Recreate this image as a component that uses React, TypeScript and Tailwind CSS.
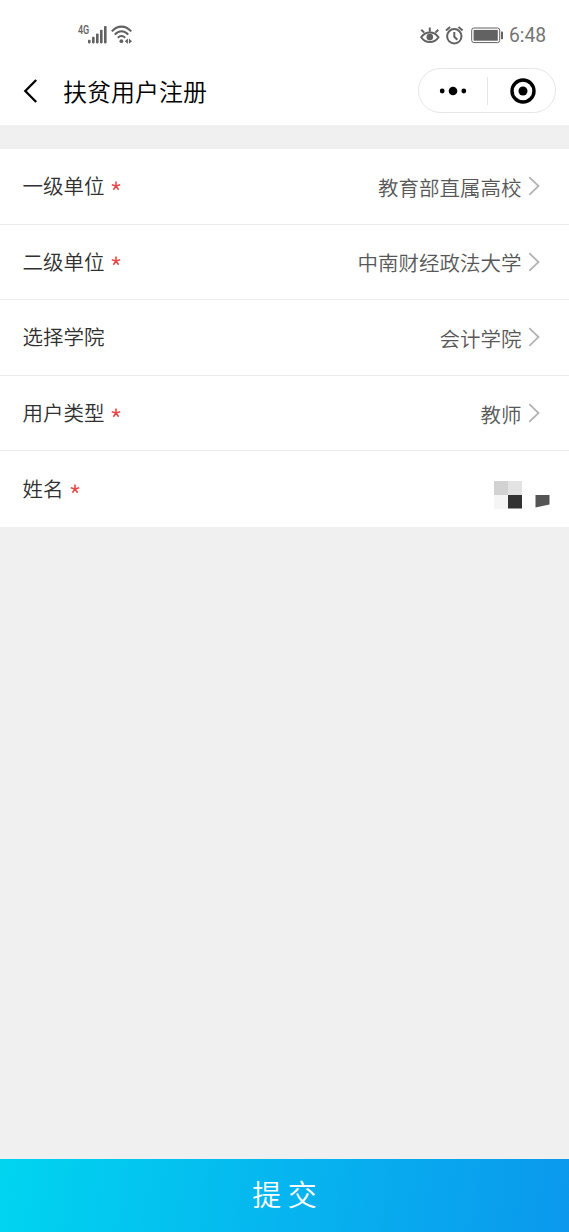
import React from "react";

type Field = { label: string; required?: boolean; value?: string };

const fields: Field[] = [
  { label: "一级单位", required: true, value: "教育部直属高校" },
  { label: "二级单位", required: true, value: "中南财经政法大学" },
  { label: "选择学院", value: "会计学院" },
  { label: "用户类型", required: true, value: "教师" },
  { label: "姓名", required: true },
];

function StatusBar() {
  return (
    <div className="flex h-[58px] shrink-0 items-start justify-between pt-[22px] pr-[24px] pl-[78px] text-[#626262]">
      <div className="flex items-start">
        <span className="mt-[2px] w-[9.5px] origin-left scale-x-[0.75] font-['Roboto',sans-serif] text-[12px] leading-[13px] font-medium">4G</span>
        <svg width="20" height="26" viewBox="0 0 20 26" fill="currentColor">
          <rect x="0" y="17.8" width="2.6" height="3.6" rx=".8" />
          <rect x="4" y="14.8" width="2.6" height="6.6" rx=".8" />
          <rect x="8" y="11.4" width="2.6" height="10" rx=".8" />
          <rect x="12" y="7.8" width="2.6" height="13.6" rx=".8" />
          <rect x="16" y="4" width="2.6" height="17.4" rx=".8" />
        </svg>
        <svg className="ml-[3.5px]" width="22" height="26" viewBox="0 0 22 26" fill="none" stroke="currentColor" strokeWidth="2.1">
          <path d="M.8 9.4C6.5 3 14.5 3 20.2 9.4" />
          <path d="M3.8 12.6c4-4.4 9.4-4.4 13.4 0" />
          <path d="M6.8 15.8c2.3-2.4 5.1-2.4 7.4 0" />
          <circle cx="10.4" cy="19.2" r="1.9" fill="currentColor" stroke="none" />
          <path d="M16.9 16.6v5.2L13.8 19.2zM17.9 16.6v5.2l3.1-2.6z" fill="currentColor" stroke="none" />
        </svg>
      </div>
      <div className="flex items-center">
        <svg width="20" height="26" viewBox="0 0 20 26" fill="none" stroke="currentColor" strokeWidth="2">
          <path d="M1.2 14.2C5.5 7.8 14.2 7.8 18.5 14.2 14.2 20.6 5.5 20.6 1.2 14.2Z" />
          <circle cx="9.8" cy="14.1" r="3.3" fill="currentColor" stroke="none" />
          <path d="M9.8 4.6v4.2M4.2 9.6 1.3 6.7M15.4 9.6 18.3 6.7" />
        </svg>
        <svg className="ml-[5px]" width="19" height="26" viewBox="0 0 19 26" fill="none" stroke="currentColor" strokeWidth="2">
          <circle cx="9.3" cy="13.3" r="7.2" />
          <path d="M9.3 9v4.8l3 3M1 7.6l4.1-3.6M17.6 7.6l-4.1-3.6" />
        </svg>
        <svg className="ml-[7px]" width="33" height="26" viewBox="0 0 33 26">
          <rect x=".7" y="5" width="28" height="14.6" rx="2.2" fill="none" stroke="currentColor" strokeWidth="1" />
          <rect x="2.6" y="6.9" width="24.2" height="10.8" fill="currentColor" />
          <rect x="30" y="8.6" width="2" height="7.6" rx=".6" fill="currentColor" />
        </svg>
        <span className="ml-[5px] w-[36px] font-['Roboto',sans-serif] text-[19.3px] leading-[27px] font-normal whitespace-nowrap text-[#747474]">6:48</span>
      </div>
    </div>
  );
}

function NavBar() {
  return (
    <header className="flex h-[67px] shrink-0 items-center pr-[13px] pb-[2px] pl-[23px] text-black">
      <svg width="16" height="26" viewBox="0 0 16 26" fill="none" stroke="currentColor" strokeWidth="2.3">
        <path d="M13.2 2 2.3 13l10.9 11" />
      </svg>
      <h1 className="ml-[24px] text-[24px] leading-[34px] font-[350]">扶贫用户注册</h1>
      <div className="ml-auto flex h-[45px] w-[138px] items-center rounded-full border border-[#e6e6e6]">
        <div className="flex w-[68px] justify-center">
          <svg width="28" height="10" viewBox="0 0 28 10" fill="currentColor">
            <circle cx="3.2" cy="5" r="2.4" />
            <circle cx="14" cy="5" r="4.3" />
            <circle cx="24.8" cy="5" r="2.4" />
          </svg>
        </div>
        <div className="h-[28px] w-px bg-[#e6e6e6]" />
        <div className="flex flex-1 justify-center pl-[2px]">
          <svg width="26" height="26" viewBox="0 0 26 26">
            <circle cx="13" cy="13" r="11" fill="none" stroke="currentColor" strokeWidth="3.4" />
            <circle cx="13" cy="13" r="4.5" fill="currentColor" />
          </svg>
        </div>
      </div>
    </header>
  );
}

function MaskedName() {
  return (
    <svg className="mt-[11px] mr-[-4px]" width="57" height="28" viewBox="0 0 57 28">
      <rect width="14" height="14" x="1" fill="#d2d2d2" />
      <rect width="14" height="14" x="15" fill="#e3e3e3" />
      <rect width="14" height="14" x="1" y="14" fill="#f5f5f5" />
      <rect width="14" height="13.5" x="15" y="14" fill="#333" />
      <path d="M42.5 14h14v9.6l-14 2.9z" fill="#555" />
    </svg>
  );
}

function FieldRow({ label, required, value }: Field) {
  return (
    <div className="flex h-[75.6px] items-center justify-between border-b border-[#ececec] bg-white pr-[23px] pl-[22.5px] last:border-b-0">
      <div className="flex items-center pb-[2px] text-[20.5px] leading-[30px] font-[350] text-[#303030]">
        <span>{label}</span>
        {required && (
          <svg className="mt-px ml-[6px]" width="10" height="10" viewBox="0 0 10 10" stroke="#e84848" strokeWidth="1.6">
            <path d="M5 5V.6M5 5 .8 3.7M5 5l4.2-1.3M5 5 2.4 8.7M5 5l2.6 3.7" />
          </svg>
        )}
      </div>
      {value ? (
        <div className="flex items-center text-[20.5px] leading-[30px] font-[350] text-[#585858]">
          <span className="mt-px">{value}</span>
          <svg className="ml-[6.5px]" width="18" height="20" viewBox="0 0 18 20" fill="none" stroke="#b4b4b4" strokeWidth="1.8">
            <path d="m1.3 1.2 9.2 8.8-9.2 8.8" />
          </svg>
        </div>
      ) : (
        <MaskedName />
      )}
    </div>
  );
}

export default function App() {
  return (
    <main className="flex h-[1232px] w-[569px] flex-col overflow-hidden bg-[#f0f0f0] font-['Noto_Sans_CJK_SC',sans-serif]">
      <div className="bg-white">
        <StatusBar />
        <NavBar />
      </div>
      <section className="mt-[24px]">
        {fields.map((field) => (
          <FieldRow key={field.label} {...field} />
        ))}
      </section>
      <button className="mt-auto h-[73px] w-full shrink-0 bg-[linear-gradient(98deg,#00d5f0_0%,#06b5ef_50%,#0b98ed_100%)] pb-[6px] text-[29px] leading-[40px] font-[350] text-white">
        提 交
      </button>
    </main>
  );
}
